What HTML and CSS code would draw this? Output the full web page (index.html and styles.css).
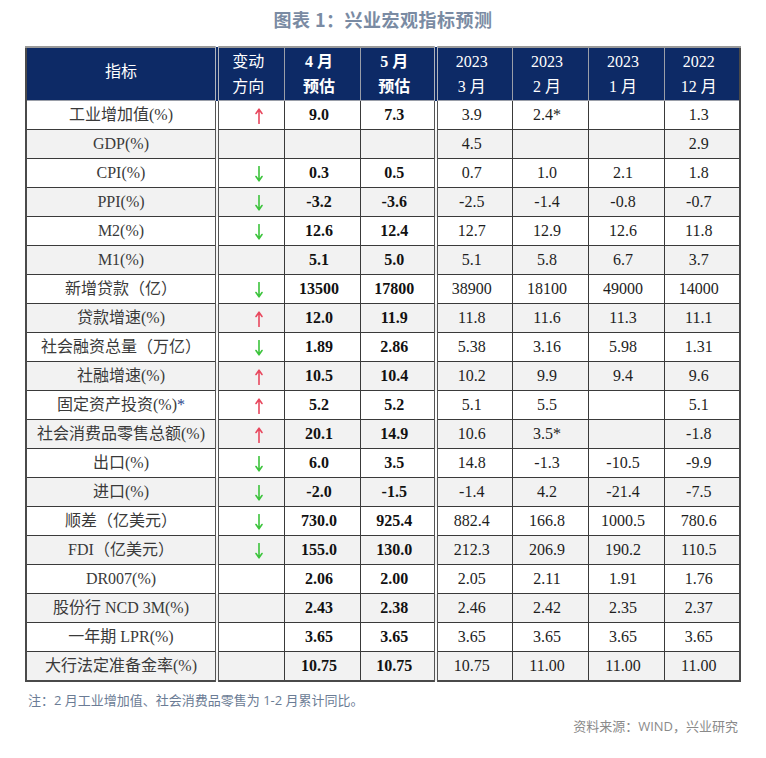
FILE: index.html
```html
<!DOCTYPE html>
<html lang="zh-CN">
<head>
<meta charset="utf-8">
<title>图表 1：兴业宏观指标预测</title>
<link rel="stylesheet" href="styles.css">
</head>
<body>
<div class="page">
  <h1 class="title">图表 1：兴业宏观指标预测</h1>
  <table class="macro">
    <colgroup>
      <col class="w-name"><col class="w-dir"><col class="w-num"><col class="w-num"><col class="w-num"><col class="w-num"><col class="w-num"><col class="w-num">
    </colgroup>
    <thead>
      <tr>
        <th class="name">指标</th>
        <th class="dir dbl"><span class="hd">变动</span><span class="hd">方向</span></th>
        <th class="est"><span class="hd">4 月</span><span class="hd">预估</span></th>
        <th class="est"><span class="hd">5 月</span><span class="hd">预估</span></th>
        <th class="dbl"><span class="hd">2023</span><span class="hd">3 月</span></th>
        <th><span class="hd">2023</span><span class="hd">2 月</span></th>
        <th><span class="hd">2023</span><span class="hd">1 月</span></th>
        <th><span class="hd">2022</span><span class="hd">12 月</span></th>
      </tr>
    </thead>
    <tbody>
      <tr><td class="name">工业增加值(%)</td><td class="dir dbl"><svg class="arrow up" viewBox="0 0 8 16"><path d="M4 15.5V1.5M1 5.5L4 1.2L7 5.5"/></svg></td><td class="est">9.0</td><td class="est">7.3</td><td class="dbl">3.9</td><td>2.4*</td><td></td><td>1.3</td></tr>
      <tr><td class="name">GDP(%)</td><td class="dir dbl"></td><td class="est"></td><td class="est"></td><td class="dbl">4.5</td><td></td><td></td><td>2.9</td></tr>
      <tr><td class="name">CPI(%)</td><td class="dir dbl"><svg class="arrow down" viewBox="0 0 8 16"><path d="M4 0.5V14.5M1 10.5L4 14.8L7 10.5"/></svg></td><td class="est">0.3</td><td class="est">0.5</td><td class="dbl">0.7</td><td>1.0</td><td>2.1</td><td>1.8</td></tr>
      <tr><td class="name">PPI(%)</td><td class="dir dbl"><svg class="arrow down" viewBox="0 0 8 16"><path d="M4 0.5V14.5M1 10.5L4 14.8L7 10.5"/></svg></td><td class="est">-3.2</td><td class="est">-3.6</td><td class="dbl">-2.5</td><td>-1.4</td><td>-0.8</td><td>-0.7</td></tr>
      <tr><td class="name">M2(%)</td><td class="dir dbl"><svg class="arrow down" viewBox="0 0 8 16"><path d="M4 0.5V14.5M1 10.5L4 14.8L7 10.5"/></svg></td><td class="est">12.6</td><td class="est">12.4</td><td class="dbl">12.7</td><td>12.9</td><td>12.6</td><td>11.8</td></tr>
      <tr><td class="name">M1(%)</td><td class="dir dbl"></td><td class="est">5.1</td><td class="est">5.0</td><td class="dbl">5.1</td><td>5.8</td><td>6.7</td><td>3.7</td></tr>
      <tr><td class="name">新增贷款（亿）</td><td class="dir dbl"><svg class="arrow down" viewBox="0 0 8 16"><path d="M4 0.5V14.5M1 10.5L4 14.8L7 10.5"/></svg></td><td class="est">13500</td><td class="est">17800</td><td class="dbl">38900</td><td>18100</td><td>49000</td><td>14000</td></tr>
      <tr><td class="name">贷款增速(%)</td><td class="dir dbl"><svg class="arrow up" viewBox="0 0 8 16"><path d="M4 15.5V1.5M1 5.5L4 1.2L7 5.5"/></svg></td><td class="est">12.0</td><td class="est">11.9</td><td class="dbl">11.8</td><td>11.6</td><td>11.3</td><td>11.1</td></tr>
      <tr><td class="name">社会融资总量（万亿）</td><td class="dir dbl"><svg class="arrow down" viewBox="0 0 8 16"><path d="M4 0.5V14.5M1 10.5L4 14.8L7 10.5"/></svg></td><td class="est">1.89</td><td class="est">2.86</td><td class="dbl">5.38</td><td>3.16</td><td>5.98</td><td>1.31</td></tr>
      <tr><td class="name">社融增速(%)</td><td class="dir dbl"><svg class="arrow up" viewBox="0 0 8 16"><path d="M4 15.5V1.5M1 5.5L4 1.2L7 5.5"/></svg></td><td class="est">10.5</td><td class="est">10.4</td><td class="dbl">10.2</td><td>9.9</td><td>9.4</td><td>9.6</td></tr>
      <tr><td class="name">固定资产投资(%)<span class="star">*</span></td><td class="dir dbl"><svg class="arrow up" viewBox="0 0 8 16"><path d="M4 15.5V1.5M1 5.5L4 1.2L7 5.5"/></svg></td><td class="est">5.2</td><td class="est">5.2</td><td class="dbl">5.1</td><td>5.5</td><td></td><td>5.1</td></tr>
      <tr><td class="name">社会消费品零售总额(%)</td><td class="dir dbl"><svg class="arrow up" viewBox="0 0 8 16"><path d="M4 15.5V1.5M1 5.5L4 1.2L7 5.5"/></svg></td><td class="est">20.1</td><td class="est">14.9</td><td class="dbl">10.6</td><td>3.5*</td><td></td><td>-1.8</td></tr>
      <tr><td class="name">出口(%)</td><td class="dir dbl"><svg class="arrow down" viewBox="0 0 8 16"><path d="M4 0.5V14.5M1 10.5L4 14.8L7 10.5"/></svg></td><td class="est">6.0</td><td class="est">3.5</td><td class="dbl">14.8</td><td>-1.3</td><td>-10.5</td><td>-9.9</td></tr>
      <tr><td class="name">进口(%)</td><td class="dir dbl"><svg class="arrow down" viewBox="0 0 8 16"><path d="M4 0.5V14.5M1 10.5L4 14.8L7 10.5"/></svg></td><td class="est">-2.0</td><td class="est">-1.5</td><td class="dbl">-1.4</td><td>4.2</td><td>-21.4</td><td>-7.5</td></tr>
      <tr><td class="name">顺差（亿美元）</td><td class="dir dbl"><svg class="arrow down" viewBox="0 0 8 16"><path d="M4 0.5V14.5M1 10.5L4 14.8L7 10.5"/></svg></td><td class="est">730.0</td><td class="est">925.4</td><td class="dbl">882.4</td><td>166.8</td><td>1000.5</td><td>780.6</td></tr>
      <tr><td class="name">FDI（亿美元）</td><td class="dir dbl"><svg class="arrow down" viewBox="0 0 8 16"><path d="M4 0.5V14.5M1 10.5L4 14.8L7 10.5"/></svg></td><td class="est">155.0</td><td class="est">130.0</td><td class="dbl">212.3</td><td>206.9</td><td>190.2</td><td>110.5</td></tr>
      <tr><td class="name">DR007(%)</td><td class="dir dbl"></td><td class="est">2.06</td><td class="est">2.00</td><td class="dbl">2.05</td><td>2.11</td><td>1.91</td><td>1.76</td></tr>
      <tr><td class="name">股份行 NCD 3M(%)</td><td class="dir dbl"></td><td class="est">2.43</td><td class="est">2.38</td><td class="dbl">2.46</td><td>2.42</td><td>2.35</td><td>2.37</td></tr>
      <tr><td class="name">一年期 LPR(%)</td><td class="dir dbl"></td><td class="est">3.65</td><td class="est">3.65</td><td class="dbl">3.65</td><td>3.65</td><td>3.65</td><td>3.65</td></tr>
      <tr><td class="name">大行法定准备金率(%)</td><td class="dir dbl"></td><td class="est">10.75</td><td class="est">10.75</td><td class="dbl">10.75</td><td>11.00</td><td>11.00</td><td>11.00</td></tr>
    </tbody>
  </table>
  <p class="note">注：2 月工业增加值、社会消费品零售为 1-2 月累计同比。</p>
  <p class="source">资料来源：WIND，兴业研究</p>
</div>
</body>
</html>
```

FILE: styles.css
```css
html, body {
  margin: 0;
  padding: 0;
  background: #ffffff;
}

.page {
  width: 766px;
  padding: 8px 0 0 25px;
  box-sizing: border-box;
  font-family: "Liberation Serif", "Noto Sans CJK SC", serif;
}

.title {
  margin: 0 0 16px 0;
  padding-right: 25px;
  text-align: center;
  font-family: "Noto Sans CJK SC", sans-serif;
  font-size: 18px;
  font-weight: 700;
  line-height: 22px;
  color: #7a8ba3;
  letter-spacing: 0.5px;
}

.macro {
  border-collapse: collapse;
  table-layout: fixed;
  width: 715px;
  border: 2px solid #4a4a4a;
  font-size: 16px;
  color: #1e1e1e;
}

.w-name { width: 191px; }
.w-dir { width: 67px; }
.w-num { width: 76px; }

.macro th {
  background: #0d2a66;
  color: #ffffff;
  font-weight: 400;
  height: 48px;
  padding: 0 6px 0 0;
  text-align: center;
  vertical-align: middle;
  border: 1px solid #9a9ea8;
  border-top: 2px solid #9a9a9a;
  line-height: 20px;
}

.hd {
  display: block;
  height: 25px;
  line-height: 25px;
  overflow: hidden;
}

.macro th.name {
  padding: 0 0 4px 0;
}

.macro th.est {
  font-weight: 700;
}

.macro td {
  height: 28px;
  padding: 0 6px 0 0;
  text-align: center;
  border: 1px solid #3a3a3a;
  line-height: 20px;
}

.macro td.name {
  padding: 0;
  color: #3a3a3a;
  white-space: nowrap;
}

.macro td.dir {
  padding: 0 0 0 16px;
}

.macro .dbl {
  border-left: 4px double #555555;
}

.macro th.dbl {
  border-left: 4px double #b0b4bc;
}

.macro td.est {
  font-weight: 700;
  color: #111111;
}

.macro tbody tr:nth-child(even) td {
  background: #f2f2f2;
}

.star {
  color: #2a3f8a;
}

.arrow {
  display: block;
  width: 8px;
  height: 16px;
  margin: 1px auto 0;
  fill: none;
  stroke-width: 1.6;
  stroke-linecap: round;
  stroke-linejoin: round;
}

.arrow.up { stroke: #e8485e; }
.arrow.down { stroke: #3cc43c; }

.note {
  margin: 8px 0 0 3px;
  font-family: "Open Sans", "Noto Sans CJK SC", sans-serif;
  font-size: 13px;
  line-height: 20px;
  color: #6b7c95;
}

.source {
  margin: 6px 0 0 0;
  padding-right: 28px;
  text-align: right;
  font-family: "Open Sans", "Noto Sans CJK SC", sans-serif;
  font-size: 13px;
  line-height: 20px;
  color: #8a8a8a;
}
```
